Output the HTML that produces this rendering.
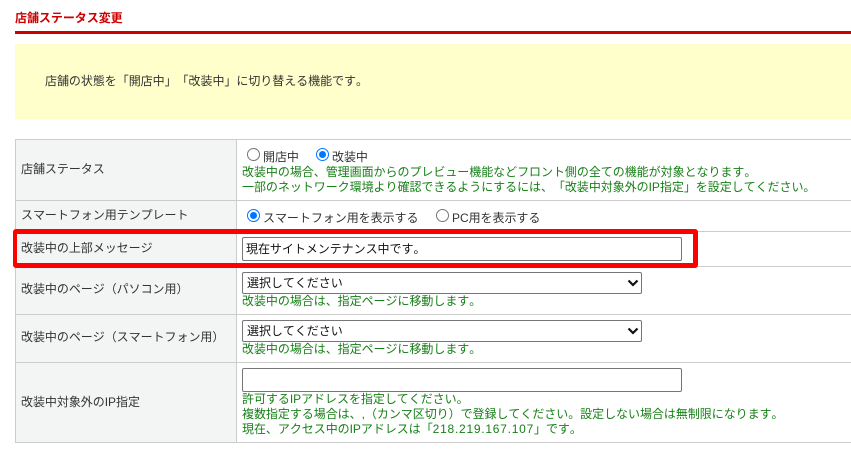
<!DOCTYPE html>
<html lang="ja"><head><meta charset="utf-8"><style>
html,body{margin:0;padding:0;background:#fff}
body{width:851px;height:454px;position:relative;overflow:hidden;font-family:"Liberation Sans","Noto Sans CJK JP",sans-serif;font-size:12px;color:#333;text-spacing-trim:space-all;font-kerning:none;font-feature-settings:"palt" 0,"chws" 0;letter-spacing:-.04px}
div{position:absolute;white-space:nowrap}
.t{line-height:16px;height:16px}
.g{color:#178017}
.h{background:#ccc}
.box{box-sizing:border-box;background:#fff;border:1px solid #767676;border-radius:2px;color:#111}
.r{box-sizing:border-box;width:13px;height:13px;border-radius:50%;background:#fff;border:1px solid #767676}
.r.on{border:1.5px solid #0075ff}
.r.on:after{content:"";position:absolute;left:1.5px;top:1.5px;width:7px;height:7px;border-radius:50%;background:#0075ff}
svg{position:absolute}
</style></head><body>
<div class="t" style="left:15px;top:10px;color:#c00;font-weight:bold">店舗ステータス変更</div>
<div style="left:15px;top:31px;width:836px;height:3px;background:#c00"></div>
<div style="left:15px;top:44px;width:836px;height:75px;background:#ffc"></div>
<div class="t" style="left:45px;top:73px">店舗の状態を「開店中」「改装中」に切り替える機能です。</div>

<div style="left:16px;top:140px;width:220px;height:302px;background:#f3f4f4"></div>
<div class="h" style="left:15px;top:139px;width:836px;height:1px"></div>
<div class="h" style="left:15px;top:200px;width:836px;height:1px"></div>
<div class="h" style="left:15px;top:231px;width:836px;height:1px"></div>
<div class="h" style="left:15px;top:266px;width:836px;height:1px"></div>
<div class="h" style="left:15px;top:314px;width:836px;height:1px"></div>
<div class="h" style="left:15px;top:362px;width:836px;height:1px"></div>
<div class="h" style="left:15px;top:442px;width:836px;height:1px"></div>
<div class="h" style="left:15px;top:139px;width:1px;height:304px"></div>
<div class="h" style="left:236px;top:139px;width:1px;height:304px"></div>

<div class="t" style="left:21px;top:161px">店舗ステータス</div>
<div class="t" style="left:21px;top:207px">スマートフォン用テンプレート</div>
<div class="t" style="left:21px;top:240px">改装中の上部メッセージ</div>
<div class="t" style="left:21px;top:281px">改装中のページ（パソコン用）</div>
<div class="t" style="left:21px;top:329px">改装中のページ（スマートフォン用）</div>
<div class="t" style="left:21px;top:394px">改装中対象外のIP指定</div>

<div class="r" style="left:247px;top:148px"></div>
<div class="t" style="left:263px;top:149px">開店中</div>
<div class="r on" style="left:316px;top:148px"></div>
<div class="t" style="left:332px;top:149px">改装中</div>
<div class="t g" style="left:242px;top:164px">改装中の場合、管理画面からのプレビュー機能などフロント側の全ての機能が対象となります。</div>
<div class="t g" style="left:242px;top:179px">一部のネットワーク環境より確認できるようにするには、「改装中対象外のIP指定」を設定してください。</div>

<div class="r on" style="left:247px;top:209px"></div>
<div class="t" style="left:263px;top:210px">スマートフォン用を表示する</div>
<div class="r" style="left:436px;top:209px"></div>
<div class="t" style="left:452px;top:210px">PC用を表示する</div>

<div class="box" style="left:242px;top:237px;width:440px;height:24px"></div>
<div class="t" style="left:246px;top:241px;color:#111">現在サイトメンテナンス中です。</div>

<div class="box" style="left:242px;top:272px;width:400px;height:22px"></div>
<div class="t" style="left:247px;top:275px;color:#111">選択してください</div>
<svg style="left:627px;top:279px" width="12" height="8" viewBox="0 0 12 8"><path d="M1.5 1.5 L6 6 L10.5 1.5" fill="none" stroke="#111" stroke-width="2.2"/></svg>
<div class="t g" style="left:242px;top:293px">改装中の場合は、指定ページに移動します。</div>

<div class="box" style="left:242px;top:320px;width:400px;height:22px"></div>
<div class="t" style="left:247px;top:323px;color:#111">選択してください</div>
<svg style="left:627px;top:327px" width="12" height="8" viewBox="0 0 12 8"><path d="M1.5 1.5 L6 6 L10.5 1.5" fill="none" stroke="#111" stroke-width="2.2"/></svg>
<div class="t g" style="left:242px;top:341px">改装中の場合は、指定ページに移動します。</div>

<div class="box" style="left:242px;top:368px;width:440px;height:24px"></div>
<div class="t g" style="left:242px;top:391px">許可するIPアドレスを指定してください。</div>
<div class="t g" style="left:242px;top:406px">複数指定する場合は、,（カンマ区切り）で登録してください。設定しない場合は無制限になります。</div>
<div class="t g" style="left:242px;top:421px">現在、アクセス中のIPアドレスは「<span style="letter-spacing:.75px">218.219.167.107</span>」です。</div>

<div style="left:13px;top:229px;width:685px;height:39px;box-sizing:border-box;border:5px solid #f00;border-left-width:4px;border-radius:3px"></div>
</body></html>
